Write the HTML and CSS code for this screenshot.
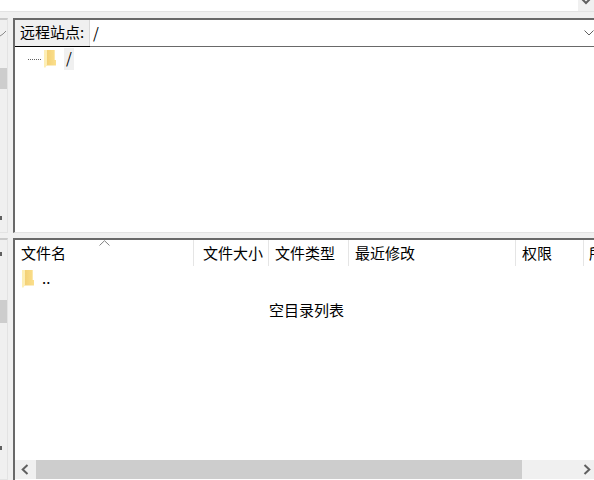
FILE: index.html
```html
<!DOCTYPE html>
<html lang="zh-CN">
<head>
<meta charset="utf-8">
<title>远程站点</title>
<link rel="stylesheet" href="styles.css">
</head>
<body>
<svg class="defs" width="0" height="0" aria-hidden="true">
  <defs>
    <linearGradient id="body" x1="0" y1="0" x2="1" y2="0">
      <stop offset="0" stop-color="#f2cf74"/>
      <stop offset="1" stop-color="#fbdf8c"/>
    </linearGradient>
  </defs>
  <symbol id="folder" viewBox="0 0 12 18">
    <path d="M2 0H10.7V10H12V15.5H2Z" fill="url(#body)"/>
    <path d="M0 0H3V15L1 18 0 17Z" fill="#fdeeb5"/>
  </symbol>
</svg>
<div class="topbar">
  <div class="top-btn">
    <svg class="chev" width="10" height="5" viewBox="0 0 10 5"><path d="M1-1 5 3 9-1" fill="none" stroke="#606060" stroke-width="2"/></svg>
  </div>
</div>
<div class="rows">
  <div class="row row-a">
    <div class="side">
      <svg class="mark mark-a" width="7" height="6" viewBox="0 0 7 6"><path d="M0 5 3 3 6 0" fill="none" stroke="#8a8a8a"/></svg>
      <div class="thumb thumb-a"></div>
      <div class="tick tick-a"></div>
    </div>
    <div class="pane">
      <div class="site">
        <div class="site-label">远程站点:</div>
        <div class="site-input">/</div>
        <svg class="combo-arrow" width="10" height="6" viewBox="0 0 10 6"><path d="M0.5 0.5 5 5 9.5 0.5" fill="none" stroke="#606060"/></svg>
      </div>
      <div class="tree">
        <div class="tree-row">
          <span class="dots"></span>
          <svg class="folder" width="12" height="18"><use href="#folder"/></svg>
          <span class="tree-name">/</span>
        </div>
      </div>
    </div>
  </div>
  <div class="row row-b">
    <div class="side">
      <div class="tick tick-b"></div>
      <div class="thumb thumb-b"></div>
      <div class="tick tick-c"></div>
    </div>
    <div class="pane pane-b">
      <div class="head">
        <div class="col col-name">文件名<svg class="sort" width="11" height="6" viewBox="0 0 11 6"><path d="M0.5 5.5 5.5 0.7 10.5 5.5" fill="none" stroke="#808080"/></svg></div>
        <div class="col col-size">文件大小</div>
        <div class="col col-type">文件类型</div>
        <div class="col col-date">最近修改</div>
        <div class="col col-perm">权限</div>
        <div class="col col-owner">所</div>
      </div>
      <div class="list">
        <div class="file">
          <svg class="folder" width="12" height="18"><use href="#folder"/></svg>
          <span class="file-name">..</span>
        </div>
        <div class="empty">空目录列表</div>
      </div>
      <div class="hscroll">
        <div class="arrow-box">
          <svg width="8" height="11" viewBox="0 0 8 11"><path d="M6.5 1 1.7 5.5 6.5 10" fill="none" stroke="#606060" stroke-width="2"/></svg>
        </div>
        <div class="hthumb"></div>
        <div class="hrest">
          <svg width="8" height="11" viewBox="0 0 8 11"><path d="M1.5 1 6.3 5.5 1.5 10" fill="none" stroke="#606060" stroke-width="2"/></svg>
        </div>
      </div>
    </div>
  </div>
</div>
</body>
</html>
```

FILE: styles.css
```css
* { box-sizing: border-box; }
html, body { margin: 0; padding: 0; }
body {
  width: 594px;
  height: 480px;
  overflow: hidden;
  background: #f0f0f0;
  color: #000;
  font: 15px/20px "Noto Sans CJK SC", "Noto Sans", sans-serif;
}
.defs { display: block; height: 0; }
.topbar {
  height: 12px;
  background: #fff;
  border-bottom: 1px solid #e3e3e3;
  display: flex;
  justify-content: flex-end;
}
.top-btn {
  width: 16px;
  height: 11px;
  background: #f0f0f0;
  display: flex;
  justify-content: center;
  align-items: flex-start;
}
.chev { display: block; }
.rows {
  display: flex;
  flex-direction: column;
  gap: 5px;
  padding-top: 6px;
  height: 468px;
}
.row { display: flex; }
.row-a { height: 215px; }
.row-b { height: 242px; }
.side {
  width: 8px;
  flex: none;
  margin-right: 5px;
  background: #f0f0f0;
  border-right: 1px solid #e3e3e3;
  border-top: 2px solid #c9c9c9;
  border-bottom: 1px solid #e3e3e3;
  display: flex;
  flex-direction: column;
}
.mark { margin-top: 11px; display: block; }
.thumb { width: 7px; background: #cdcdcd; }
.thumb-a { height: 21px; margin-top: 31px; }
.thumb-b { height: 23px; margin-top: 44px; }
.tick { width: 2px; height: 4px; background: #606060; }
.tick-a { margin-top: 127px; }
.tick-b { margin-top: 12px; }
.tick-c { margin-top: 123px; }
.pane {
  flex: 1;
  min-width: 0;
  display: flex;
  flex-direction: column;
  background: #fff;
  border-left: 2px solid #696969;
  border-top: 2px solid #696969;
  border-bottom: 1px solid #e3e3e3;
}
.pane-b { border-bottom: 0; padding-bottom: 1px; }
.site {
  height: 27px;
  display: flex;
  align-items: center;
  border-bottom: 1px solid #696969;
}
.site-label {
  width: 75px;
  height: 26px;
  background: #f0f0f0;
  border-right: 1px solid #d9d9d9;
  box-shadow: 0 1px 0 #000;
  padding: 2px 0 0 5px;
}
.site-input {
  flex: 1;
  padding-left: 3px;
  margin-top: -1px;
}
.combo-arrow { margin-top: -1px; flex: none; }
.tree { flex: 1; }
.tree-row { display: flex; align-items: center; height: 24px; padding-left: 13px; }
.dots {
  width: 13px;
  height: 0;
  border-top: 1px dotted #606060;
}
.tree-row .folder { margin-left: 3px; }
.folder { display: block; flex: none; }
.tree-name {
  width: 10px;
  height: 22px;
  margin-left: 8px;
  background: #f0f0f0;
  text-align: center;
}
.head { display: flex; height: 26px; flex: none; }
.col {
  height: 26px;
  border-right: 1px solid #e5e5e5;
  padding-top: 3px;
  white-space: nowrap;
  overflow: hidden;
}
.col-name { width: 179px; padding-left: 6px; position: relative; }
.sort { position: absolute; left: 84px; top: 0; }
.col-size { width: 75px; padding-left: 9px; }
.col-type { width: 80px; padding-left: 6px; }
.col-date { width: 167px; padding-left: 6px; }
.col-perm { width: 68px; padding-left: 6px; }
.col-owner { flex: 1; min-width: 0; border-right: 0; padding-left: 5px; }
.list { flex: 1; padding-top: 2px; }
.file { display: flex; align-items: center; height: 21px; padding-left: 7px; }
.file-name { margin-left: 8px; margin-top: -1px; }
.empty { margin-top: 11px; padding-left: 4px; text-align: center; }
.hscroll { display: flex; height: 19px; flex: none; }
.arrow-box {
  width: 21px;
  background: #f0f0f0;
  display: flex;
  align-items: center;
  padding-left: 6px;
}
.hthumb { width: 486px; background: #cdcdcd; }
.hrest {
  flex: 1;
  background: #f0f0f0;
  display: flex;
  align-items: center;
  justify-content: flex-end;
  padding-right: 3px;
}
```
